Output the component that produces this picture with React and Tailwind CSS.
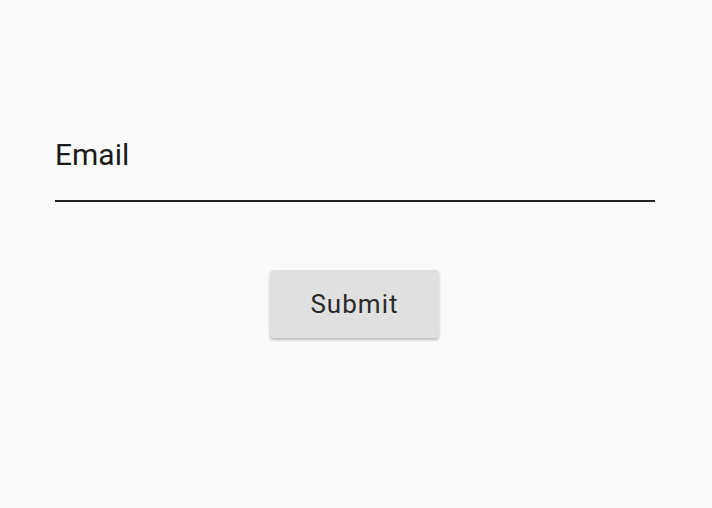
export default function App() {
  return (
    <div className="w-[712px] h-[508px] bg-[#fafafa] flex flex-col pl-[55px]" style={{ fontFamily: 'Roboto, "Liberation Sans", sans-serif' }}>
      <div className="mt-[137px] w-[600px] border-b-2 border-[#222] h-[65px] flex items-start">
        <span className="text-[30px] leading-[36px] text-[#1a1a1a]">Email</span>
      </div>
      <button className="mt-[68px] ml-[215px] w-[169px] h-[68px] bg-[#e0e0e0] rounded-[4px] shadow-[0_2px_3px_rgba(0,0,0,0.25)] text-[26px] tracking-[0.04em] text-[#2a2a2a]">
        Submit
      </button>
    </div>
  );
}
